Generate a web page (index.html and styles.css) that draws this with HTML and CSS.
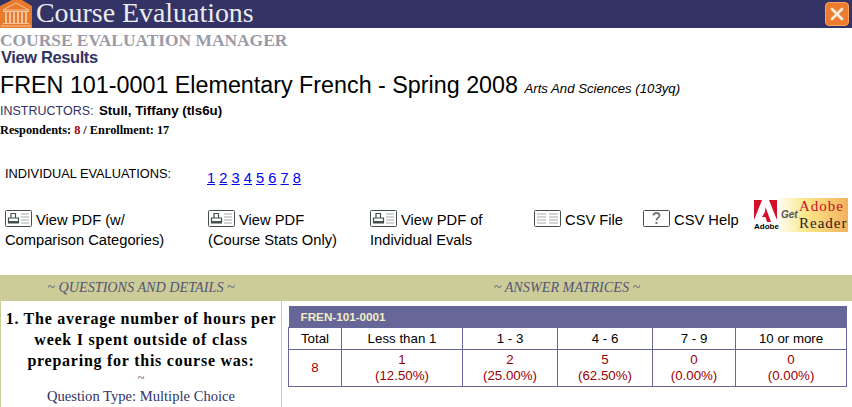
FILE: index.html
```html
<!DOCTYPE html>
<html lang="en">
<head>
    <meta charset="UTF-8">
    <meta name="viewport" content="width=device-width, initial-scale=1.0">
    <title>Course Evaluations</title>
    <link rel="stylesheet" href="styles.css">
</head>
<body>
    <div class="banner">
        <svg class="logo" width="32" height="28" viewBox="0 0 32 28">
            <path d="M0 6L12 0H22L32 6V28H0Z" fill="#e87a2c"/>
            <path d="M3 10L16 3L29 10Z" fill="none" stroke="#f8c49c" stroke-width="1"/>
            <path d="M3 11.5H29M3 23.5H29M1 26H31" stroke="#f8c49c" stroke-width="1.2"/>
            <path d="M6 12v11M10 12v11M14 12v11M18 12v11M22 12v11M26 12v11" stroke="#fbe0cb" stroke-width="1.4"/>
        </svg>
        <div class="banner-title">Course Evaluations</div>
        <div class="close-btn">
            <svg width="14" height="14" viewBox="0 0 14 14">
                <path d="M2 2 L12 12 M12 2 L2 12" stroke="#f6efe6" stroke-width="2.6" stroke-linecap="round"/>
            </svg>
        </div>
    </div>

    <div class="manager">COURSE EVALUATION MANAGER</div>
    <div class="subtitle">View Results</div>
    <h1 class="course">FREN 101-0001 Elementary French - Spring 2008 <span class="school">Arts And Sciences (103yq)</span></h1>
    <div class="instructors">INSTRUCTORS: <b>Stull, Tiffany (tls6u)</b></div>
    <div class="respondents">Respondents: <span class="red">8</span> / Enrollment: 17</div>

    <div class="individual">
        <div class="individual-label">INDIVIDUAL EVALUATIONS:</div>
        <div class="individual-links">
            <a href="#">1</a> <a href="#">2</a> <a href="#">3</a> <a href="#">4</a> <a href="#">5</a> <a href="#">6</a> <a href="#">7</a> <a href="#">8</a>
        </div>
    </div>

    <div class="actions">
        <div class="action w-pdf1">
            <svg class="icon" width="27" height="17" viewBox="0 0 27 17"><use href="#pdf"/></svg> View PDF (w/<br>Comparison Categories)
        </div>
        <div class="action w-pdf2">
            <svg class="icon" width="27" height="17" viewBox="0 0 27 17"><use href="#pdf"/></svg> View PDF<br>(Course Stats Only)
        </div>
        <div class="action w-pdf3">
            <svg class="icon" width="27" height="17" viewBox="0 0 27 17"><use href="#pdf"/></svg> View PDF of<br>Individual Evals
        </div>
        <div class="action w-csv">
            <svg class="icon" width="27" height="17" viewBox="0 0 27 17">
                <rect x="0.5" y="0.5" width="26" height="16" rx="1" fill="#fff" stroke="#44504c"/>
                <path d="M3 4h9M3 7h9M3 10h9M3 13h9M15 4h9M15 7h9M15 10h9M15 13h9" stroke="#a9a9a9" stroke-width="1.2"/>
            </svg> CSV File
        </div>
        <div class="action w-help">
            <svg class="icon" width="27" height="17" viewBox="0 0 27 17">
                <rect x="0.5" y="0.5" width="26" height="16" rx="1" fill="#fff" stroke="#44504c"/>
                <path d="M10.5 5.5 Q10.5 3 13.5 3 Q16.5 3 16.5 5.5 Q16.5 7 14.8 8 Q13.5 8.8 13.5 10.5" fill="none" stroke="#777" stroke-width="1.8"/>
                <rect x="12.5" y="12" width="2" height="2" fill="#777"/>
            </svg> CSV Help
        </div>
        <div class="adobe">
            <div class="adobe-mark">
                <svg width="23" height="22" viewBox="0 0 23 22">
                    <path d="M0 0H8L0 20Z M15 0H23V20Z M11.5 7L17 22H13L11.5 17H8L11 12Z" fill="#d3102a"/>
                </svg>
                <span class="adobe-small">Adobe</span>
            </div>
            <span class="adobe-get">Get</span>
            <div class="adobe-name"><span>Adobe</span><span class="adobe-reader">Reader</span></div>
        </div>
    </div>

    <div class="band">
        <div class="band-left">~ QUESTIONS AND DETAILS ~</div>
        <div class="band-right">~ ANSWER MATRICES ~</div>
    </div>

    <div class="results">
        <div class="question">
            <div class="question-text">1. The average number of hours per week I spent outside of class preparing for this course was:</div>
            <div class="tilde">~</div>
            <div class="question-type">Question Type: Multiple Choice</div>
        </div>
        <div class="matrix-cell">
            <table class="matrix">
                <colgroup>
                    <col class="c1"><col class="c2"><col class="c3"><col class="c4"><col class="c5"><col class="c6">
                </colgroup>
                <tr><th colspan="6">FREN-101-0001</th></tr>
                <tr class="labels">
                    <td>Total</td><td>Less than 1</td><td>1 - 3</td><td>4 - 6</td><td>7 - 9</td><td>10 or more</td>
                </tr>
                <tr class="values">
                    <td>8</td>
                    <td>1<br>(12.50%)</td>
                    <td>2<br>(25.00%)</td>
                    <td>5<br>(62.50%)</td>
                    <td>0<br>(0.00%)</td>
                    <td>0<br>(0.00%)</td>
                </tr>
            </table>
        </div>
    </div>

    <svg width="0" height="0" class="defs">
        <symbol id="pdf" viewBox="0 0 27 17">
            <rect x="0.5" y="0.5" width="26" height="16" rx="1" fill="#fff" stroke="#44504c"/>
            <path d="M6 8V3.5h4.5V8M3.5 8h10v5h-10z" fill="#fff" stroke="#44504c" stroke-width="1.2"/>
            <rect x="3.5" y="11" width="10" height="2" fill="#44504c"/>
            <path d="M16 4h8M16 7h8M16 10h8M16 13h8" stroke="#a9a9a9" stroke-width="1.2"/>
        </symbol>
    </svg>
</body>
</html>
```

FILE: styles.css
```css
html, body {
    overflow: hidden;
}
body {
    margin: 0;
    font-family: "Liberation Sans", Arial, sans-serif;
    font-size: 14.7px;
    color: #000;
    background-color: #fff;
}
.banner {
    display: flex;
    align-items: center;
    height: 28px;
    background-color: #333366;
}
.logo {
    flex: none;
}
.banner-title {
    flex: 1;
    margin-left: 4px;
    font-family: "Liberation Serif", serif;
    font-size: 27.9px;
    line-height: 26px;
    padding-bottom: 2px;
    color: #ecebef;
}
.close-btn {
    display: flex;
    align-items: center;
    justify-content: center;
    width: 22px;
    height: 22px;
    margin-right: 3px;
    border: 1px solid #f5a463;
    border-radius: 4px;
    background-color: #ee7c2e;
}
.manager {
    height: 20px;
    font-family: "Liberation Serif", serif;
    font-size: 17.4px;
    font-weight: bold;
    line-height: 25px;
    color: #9a9aa6;
}
.subtitle {
    height: 17px;
    padding-left: 1px;
    font-size: 16.5px;
    font-weight: bold;
    line-height: 18px;
    letter-spacing: -0.4px;
    color: #333366;
}
.course {
    margin: 0;
    padding-top: 6px;
    font-size: 23.3px;
    font-weight: normal;
    line-height: 28px;
}
.school {
    font-size: 13.2px;
    font-style: italic;
}
.instructors {
    font-size: 12.5px;
    line-height: 16px;
    color: #333366;
}
.instructors b {
    margin-left: 2px;
    font-size: 13.3px;
    color: #000;
}
.respondents {
    padding-top: 3px;
    font-family: "Liberation Serif", serif;
    font-size: 12.3px;
    font-weight: bold;
    line-height: 16px;
}
.red {
    color: #990000;
}
.individual {
    display: flex;
    padding-top: 28px;
    height: 35px;
}
.individual-label {
    width: 202px;
    padding-left: 5px;
    font-size: 12.8px;
    line-height: 16px;
}
.individual-links {
    padding-top: 4px;
    line-height: 16px;
}
.individual-links a {
    color: #0000ee;
}
.actions {
    display: flex;
    height: 74px;
    padding-top: 9px;
    padding-left: 5px;
    box-sizing: border-box;
    line-height: 20px;
}
.action {
    flex: none;
    color: #000;
}
.icon {
    vertical-align: -2px;
}
.w-pdf1 { width: 203px; }
.w-pdf2 { width: 162px; }
.w-pdf3 { width: 164px; }
.w-csv { width: 109px; }
.w-help { width: 110px; }
.defs {
    position: absolute;
}
.adobe {
    display: flex;
    flex: none;
    align-items: center;
    width: 95px;
    height: 34px;
    margin-top: -12px;
    background: linear-gradient(90deg, #fff 0%, #fff 24%, #fbe88a 55%, #f2b25c 100%);
    font-family: "Liberation Serif", serif;
}
.adobe-mark {
    display: flex;
    flex-direction: column;
    width: 24px;
    margin-left: 1px;
}
.adobe-small {
    font-family: "Liberation Sans", sans-serif;
    font-size: 8px;
    font-weight: bold;
    line-height: 9px;
}
.adobe-get {
    width: 16px;
    margin-left: 3px;
    font-family: "Liberation Sans", sans-serif;
    font-size: 10px;
    font-style: italic;
    font-weight: bold;
    color: #555;
}
.adobe-name {
    display: flex;
    flex-direction: column;
    margin-left: 2px;
    font-size: 15px;
    line-height: 17px;
    letter-spacing: 1px;
    color: #c8102e;
}
.adobe-reader {
    color: #222;
}
.band {
    display: flex;
    height: 26px;
    background-color: #cccc99;
    font-family: "Liberation Serif", serif;
    font-size: 14.2px;
    font-style: italic;
    line-height: 25px;
    color: #555577;
}
.band-left {
    width: 282px;
    text-align: center;
}
.band-right {
    flex: 1;
    text-align: center;
}
.results {
    display: flex;
    height: 106px;
}
.question {
    width: 280px;
    border-left: 1px solid #cccc99;
    border-right: 1px solid #cccc99;
    padding-top: 7px;
    font-family: "Liberation Serif", serif;
    text-align: center;
    color: #333366;
}
.question-text {
    padding: 0 2px;
    font-size: 16px;
    font-weight: bold;
    line-height: 21px;
    letter-spacing: 0.75px;
    color: #000;
}
.tilde {
    font-size: 12px;
    line-height: 14px;
}
.question-type {
    padding-top: 3px;
    font-size: 14.6px;
    line-height: 17px;
}
.matrix-cell {
    flex: 1;
    padding: 5px 0 0 6px;
}
.matrix {
    width: 558px;
    border-collapse: collapse;
    table-layout: fixed;
    font-size: 13.3px;
    text-align: center;
}
.matrix th {
    height: 21px;
    padding: 0 0 0 12px;
    background-color: #666699;
    color: #f3eec4;
    font-size: 11.7px;
    text-align: left;
}
.matrix td {
    padding: 0;
    border: 1px solid #666699;
    line-height: 16px;
}
.labels td {
    height: 21px;
}
.values td {
    height: 36px;
    color: #990000;
}
.c1 { width: 53px; }
.c2 { width: 121px; }
.c3 { width: 95px; }
.c4 { width: 95px; }
.c5 { width: 83px; }
.c6 { width: 111px; }
```
